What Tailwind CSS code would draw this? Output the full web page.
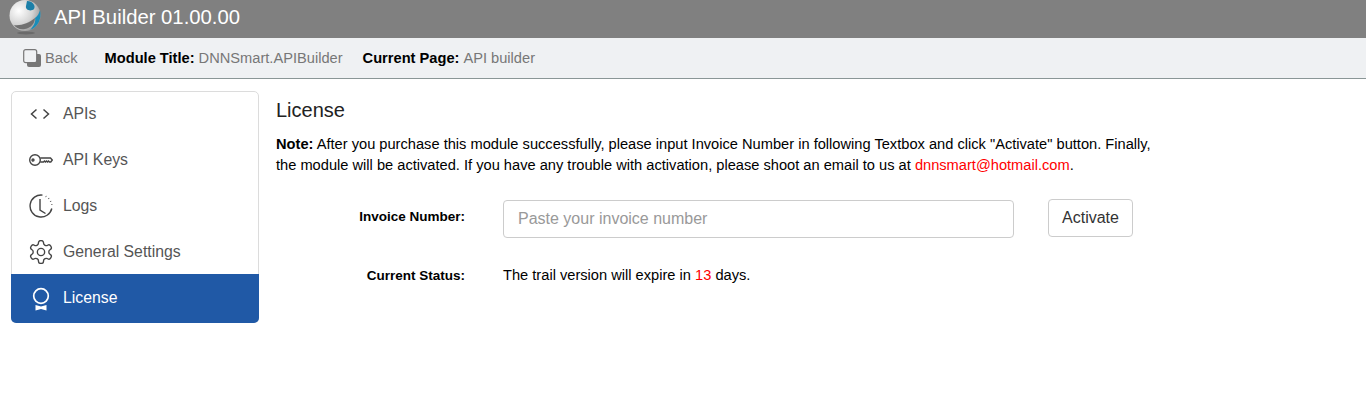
<!DOCTYPE html>
<html lang="en">
<head>
  <meta charset="UTF-8">
  <title>API Builder</title>
  <script src="https://cdn.jsdelivr.net/npm/@tailwindcss/browser@4"></script>
</head>
<body class="bg-white font-['Liberation_Sans',Arial,sans-serif] text-[14.65px] text-black h-[418px] overflow-hidden">

  <!-- Title bar -->
  <div class="h-[38px] bg-[#808080] flex items-center overflow-hidden">
    <svg class="ml-[8px] w-[34px] h-[36px] -mt-[2px] shrink-0" viewBox="0 0 34 36">
      <defs>
        <radialGradient id="ball" cx="30%" cy="35%" r="80%">
          <stop offset="0" stop-color="#ffffff"/>
          <stop offset="0.55" stop-color="#d4d4d4"/>
          <stop offset="1" stop-color="#8f8f8f"/>
        </radialGradient>
      </defs>
      <ellipse cx="18" cy="33" rx="9" ry="1.5" fill="#6a6a6a"/>
      <circle cx="17" cy="15.500" r="15.500" fill="url(#ball)"/>
      <path d="M19 1 C25 1 28 6 26 9 C23 12 17 10 18 6 Z" fill="#1b7fa8"/>
      <path d="M32 10 C34 19 30 27 22 30 C26 26 28 21 27 18 C30 16 31 13 32 10 Z" fill="#1a8db8"/>
      <path d="M6 25 C13 26 21 23 27 18 C27 23 23 28 17 29 C12 30 8 28 6 25 Z" fill="#707070"/>
    </svg>
    <span class="ml-[12px] -mt-[4px] text-[20.3px] text-white leading-none">API Builder 01.00.00</span>
  </div>

  <!-- Breadcrumb bar -->
  <div class="h-[41px] bg-[#eff1f3] border-b border-[#8a9696] flex items-center pl-[23px] pt-[2px]">
    <a class="flex items-center text-[#777]" href="#">
      <svg class="w-[19px] h-[19px] mr-[3px]" viewBox="0 0 19 19">
        <rect x="4" y="5" width="14" height="13" rx="2" fill="#777"/>
        <rect x="0.7" y="0.7" width="13" height="13" rx="2" fill="#eff1f3" stroke="#777" stroke-width="1.2"/>
      </svg>
      Back
    </a>
    <span class="ml-[27px] font-bold">Module Title:</span>
    <span class="ml-[4px] text-[#777]">DNNSmart.APIBuilder</span>
    <span class="ml-[20px] font-bold">Current Page:</span>
    <span class="ml-[4px] text-[#777]">API builder</span>
  </div>

  <div class="flex pt-[12px] pl-[11px]">
    <!-- Side menu -->
    <ul class="w-[248px] h-[232px] shrink-0 rounded-[5px] border border-[#dcdcdc] text-[#555] text-[15.8px] flex flex-col">
      <li class="h-[44px] flex items-center pl-[17px]">
        <svg class="w-[22px] h-[22px] mr-[12px]" viewBox="0 0 22 22" fill="none" stroke="#444" stroke-width="1.5"><path d="M7.500 6.500 2.500 11l5 4.500M14.500 6.500l5 4.500-5 4.500"/></svg>
        APIs
      </li>
      <li class="h-[46px] flex items-center pl-[17px] pt-[2px]">
        <svg class="w-[24px] h-[14px] mr-[10px]" viewBox="0 0 24 14" fill="none" stroke="#444" stroke-width="1.4"><circle cx="6" cy="7" r="5.300"/><circle cx="4" cy="7" r="1"/><path d="M11.300 5h10.200l1.800 2-1.500 2h-1.300l-1-1-1 1-1-1-1 1-1-1-1 1h-3.300"/></svg>
        API Keys
      </li>
      <li class="h-[46px] flex items-center pl-[17px] pt-[2px]">
        <svg class="w-[24px] h-[24px] mr-[10px]" viewBox="0 0 24 24" fill="none" stroke="#444" stroke-width="1.4"><path d="M13.500 1.100A11 11 0 1 0 22.800 14.500"/><path d="M16.700 2.300l.6.400M19.500 4.300l.5.500M21.500 7l.3.600M22.700 10.300l.1.700" stroke-width="1.500"/><path d="M11 5v11l5.500 3.500"/></svg>
        Logs
      </li>
      <li class="h-[46px] flex items-center pl-[17px] pt-[2px]">
        <svg class="w-[24px] h-[24px] mr-[10px]" viewBox="1.500 1.500 21 21" fill="none" stroke="#444" stroke-width="1.2" stroke-linejoin="round"><path d="M12.220 2h-.44a2 2 0 0 0-2 2v.18a2 2 0 0 1-1 1.730l-.43.25a2 2 0 0 1-2 0l-.15-.08a2 2 0 0 0-2.730.73l-.22.38a2 2 0 0 0 .73 2.730l.15.1a2 2 0 0 1 1 1.720v.51a2 2 0 0 1-1 1.740l-.15.09a2 2 0 0 0-.73 2.730l.22.38a2 2 0 0 0 2.730.73l.15-.08a2 2 0 0 1 2 0l.43.25a2 2 0 0 1 1 1.730V20a2 2 0 0 0 2 2h.44a2 2 0 0 0 2-2v-.18a2 2 0 0 1 1-1.730l.43-.25a2 2 0 0 1 2 0l.15.08a2 2 0 0 0 2.730-.73l.22-.39a2 2 0 0 0-.73-2.730l-.15-.08a2 2 0 0 1-1-1.740v-.5a2 2 0 0 1 1-1.740l.15-.09a2 2 0 0 0 .73-2.730l-.22-.38a2 2 0 0 0-2.730-.73l-.15.08a2 2 0 0 1-2 0l-.43-.25a2 2 0 0 1-1-1.730V4a2 2 0 0 0-2-2z"/><circle cx="12" cy="12" r="3.200"/></svg>
        General Settings
      </li>
      <li class="flex-1 -mx-px -mb-px rounded-b-[5px] flex items-center pl-[18px] pb-[1px] bg-[#2059a6] text-white">
        <svg class="w-[24px] h-[24px] mr-[10px] mt-[2px]" viewBox="0 0 24 24" fill="none" stroke="#fff" stroke-width="1.700"><circle cx="12" cy="9" r="7.300"/><path d="M6.500 18l5.500 1.500L17.500 18v5.500L12 22l-5.500 1.500z" fill="#fff" stroke="none"/></svg>
        License
      </li>
    </ul>

    <!-- Main -->
    <div class="ml-[17px] w-[880px]">
      <h2 class="text-[20px] leading-[24px] mt-[7px] text-[#222]">License</h2>
      <p class="mt-[12px] leading-[21px]"><b>Note:</b> After you purchase this module successfully, please input Invoice Number in following Textbox and click "Activate" button. Finally, the module will be activated. If you have any trouble with activation, please shoot an email to us at <span class="text-[#f00]">dnnsmart@hotmail.com</span>.</p>

      <div class="mt-[23px] flex items-start">
        <label class="w-[189px] text-right text-[13.5px] font-bold leading-[36px]">Invoice Number:</label>
        <input class="ml-[38px] w-[511px] h-[38px] mt-[1px] border border-[#ccc] rounded-[4px] px-[14px] text-[16px] placeholder:text-[#999]" placeholder="Paste your invoice number">
        <button class="ml-[34px] w-[85px] h-[38px] border border-[#ccc] rounded-[4px] text-[#333] text-[16px]">Activate</button>
      </div>

      <div class="mt-[28px] flex items-center h-[20px]">
        <label class="w-[189px] text-right text-[13.5px] font-bold">Current Status:</label>
        <span class="ml-[38px]">The trail version will expire in <span class="text-[#f00]">13</span> days.</span>
      </div>
    </div>
  </div>
</body>
</html>
